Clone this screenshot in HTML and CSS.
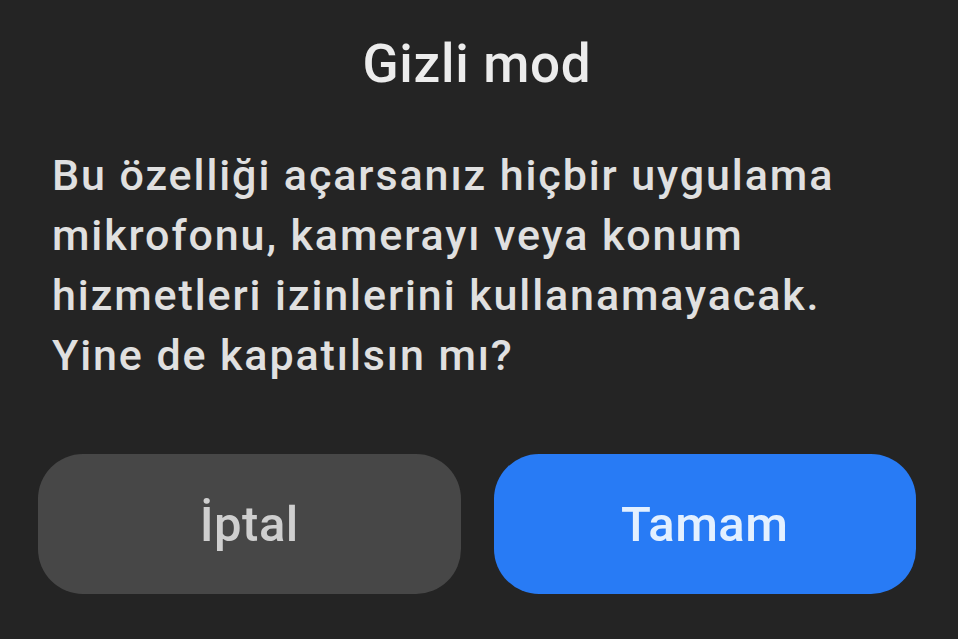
FILE: index.html
```html
<!DOCTYPE html>
<html lang="tr">
<head>
<meta charset="utf-8">
<link rel="stylesheet" href="styles.css">
</head>
<body>
<div class="dialog">
  <h1 class="title">Gizli mod</h1>
  <p class="message">Bu özelliği açarsanız hiçbir uygulama mikrofonu, kamerayı veya konum hizmetleri izinlerini kullanamayacak.<br>Yine de kapatılsın mı?</p>
  <div class="actions">
    <button class="btn btn-cancel">İptal</button>
    <button class="btn btn-ok">Tamam</button>
  </div>
</div>
</body>
</html>
```
FILE: styles.css
```css
html, body {
  margin: 0;
  padding: 0;
  background: #242424;
}
body {
  font-family: Roboto, "Noto Sans", sans-serif;
  width: 958px;
  height: 639px;
  overflow: hidden;
}
.dialog {
  display: flex;
  flex-direction: column;
  padding: 0 42px 0 38px;
}
.title {
  margin: 32px 0 0;
  text-align: center;
  font-size: 53px;
  font-weight: 500;
  letter-spacing: 0.7px;
  line-height: 64px;
  color: #ececec;
}
.message {
  margin: 49px 0 0 14px;
  font-size: 43px;
  line-height: 60px;
  font-weight: 500;
  letter-spacing: 1.9px;
  color: #e0e0e0;
  width: 870px;
}
.actions {
  display: flex;
  gap: 33px;
  margin-top: 69px;
}
.btn {
  flex: 1;
  height: 140px;
  border: none;
  border-radius: 45px;
  font-family: inherit;
  font-size: 49px;
  font-weight: 500;
  letter-spacing: 0.5px;
}
.btn-cancel {
  background: #474747;
  color: #cfcfcf;
}
.btn-ok {
  background: #287bf5;
  color: #e3f0ff;
}
```
